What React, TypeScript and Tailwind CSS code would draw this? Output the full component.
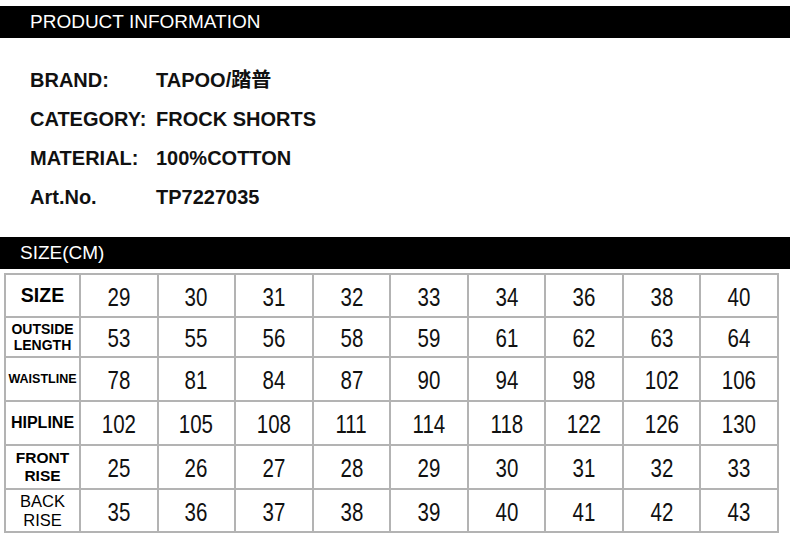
const info = [
  { label: 'BRAND:', value: 'TAPOO/踏普' },
  { label: 'CATEGORY:', value: 'FROCK SHORTS' },
  { label: 'MATERIAL:', value: '100%COTTON' },
  { label: 'Art.No.', value: 'TP7227035' },
];

const rows = [
  { label: ['SIZE'], cls: 'text-[19.5px] font-bold', h: 'h-[43px]', values: [29, 30, 31, 32, 33, 34, 36, 38, 40] },
  { label: ['OUTSIDE', 'LENGTH'], cls: 'text-[14px] font-bold leading-[16px]', h: 'h-[40px]', values: [53, 55, 56, 58, 59, 61, 62, 63, 64] },
  { label: ['WAISTLINE'], cls: 'text-[12.5px] font-bold', h: 'h-[44px]', values: [78, 81, 84, 87, 90, 94, 98, 102, 106] },
  { label: ['HIPLINE'], cls: 'text-[16px] font-bold', h: 'h-[44px]', values: [102, 105, 108, 111, 114, 118, 122, 126, 130] },
  { label: ['FRONT', 'RISE'], cls: 'text-[15.5px] font-bold leading-[18px]', h: 'h-[44px]', values: [25, 26, 27, 28, 29, 30, 31, 32, 33] },
  { label: ['BACK', 'RISE'], cls: 'text-[16.5px] leading-[19px]', h: 'h-[43px]', values: [35, 36, 37, 38, 39, 40, 41, 42, 43] },
];

function Bar({ title, pad }: { title: string; pad: string }) {
  return (
    <div className={`h-[32px] bg-black text-white text-[19px] flex items-center ${pad}`}>
      {title}
    </div>
  );
}

export default function App() {
  return (
    <div className="w-[790px] h-[537px] bg-white text-black pt-[6px] font-['Liberation_Sans','Noto_Sans_CJK_SC',sans-serif] overflow-hidden">
      <Bar title="PRODUCT INFORMATION" pad="pl-[30px]" />

      <div className="mt-[22px] flex flex-col">
        {info.map((r) => (
          <div key={r.label} className="h-[39px] flex items-center text-[20px] font-bold text-[#111]">
            <span className="w-[156px] pl-[30px]">{r.label}</span>
            <span>{r.value}</span>
          </div>
        ))}
      </div>

      <div className="mt-[21px]">
        <Bar title="SIZE(CM)" pad="pl-[20px]" />
      </div>

      <table className="mt-[4px] ml-[4px] w-[775px] border-collapse table-fixed">
        <colgroup>
          <col className="w-[75px]" />
          {Array.from({ length: 9 }).map((_, i) => (
            <col key={i} />
          ))}
        </colgroup>
        <tbody>
          {rows.map((r) => (
            <tr key={r.label.join(' ')} className={r.h}>
              <td className={`border-2 border-[#b3b3b3] text-center p-0 ${r.cls}`}>
                {r.label.map((l) => (
                  <div key={l}>{l}</div>
                ))}
              </td>
              {r.values.map((v, i) => (
                <td key={i} className="border-2 border-[#b3b3b3] text-center p-0 pt-[3px] text-[25px] leading-none text-[#111]">
                  <span className="inline-block scale-x-[0.82]">{v}</span>
                </td>
              ))}
            </tr>
          ))}
        </tbody>
      </table>
    </div>
  );
}
